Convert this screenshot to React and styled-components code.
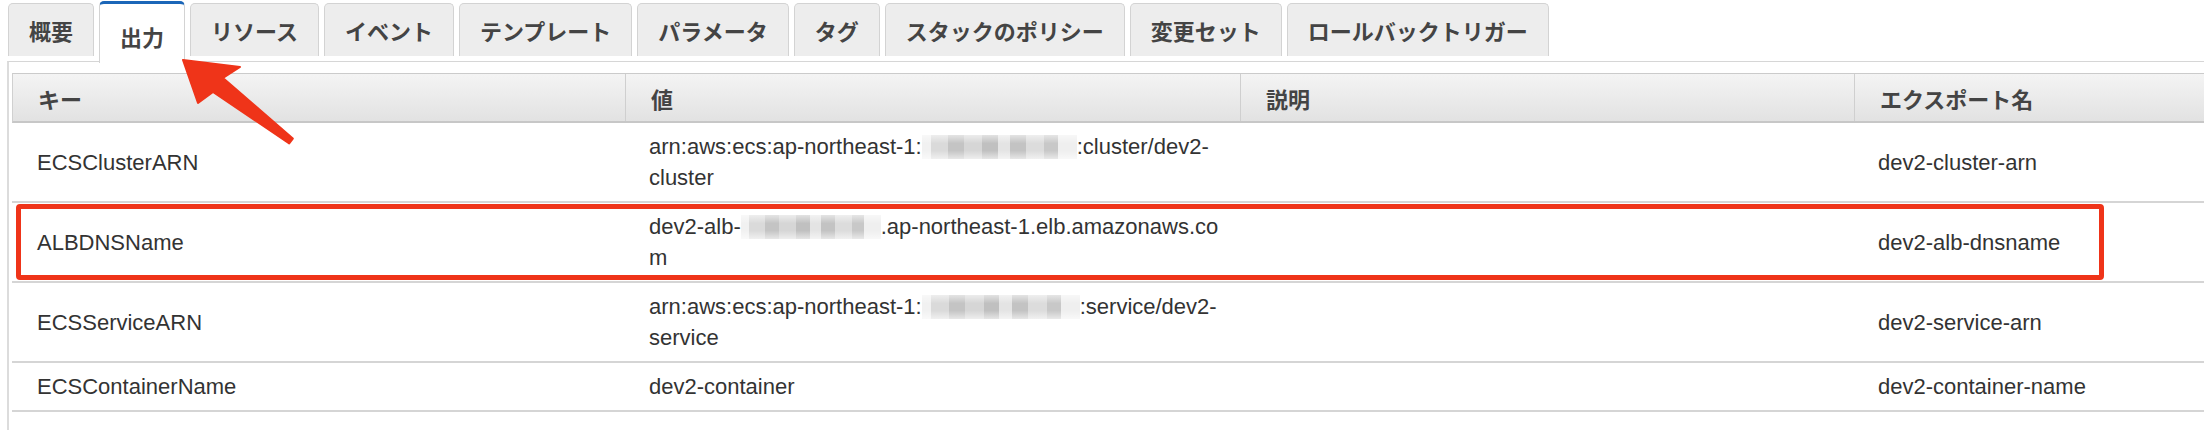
import React from "react"
import styled, { createGlobalStyle, css } from "styled-components"

const GlobalStyle = createGlobalStyle`
  html, body {
    margin: 0;
    padding: 0;
    background: #fff;
    overflow: hidden;
  }
  body {
    font-family: "Liberation Sans", Arial, "Noto Sans CJK JP", sans-serif;
    color: #333;
  }
`

const Page = styled.div`
  position: relative;
  width: 2204px;
  height: 430px;
  overflow: hidden;
`

const TabBar = styled.div`
  display: flex;
  align-items: flex-start;
  gap: 5px;
  height: 61px;
  padding-left: 8px;
`

const Tab = styled.div`
  box-sizing: border-box;
  height: 53px;
  margin-top: 3px;
  padding: 0 20px;
  display: flex;
  align-items: center;
  border: 1px solid #d3d3d3;
  border-bottom: none;
  border-radius: 5px 5px 0 0;
  background: #ededed;
  font-family: "Noto Sans CJK JP", sans-serif;
  font-weight: 700;
  font-size: 22px;
  color: #444;
  white-space: nowrap;

  ${(p) =>
    p.$active &&
    css`
      position: relative;
      z-index: 1;
      height: 62px;
      margin-top: 1px;
      padding-top: 5px;
      background: #fff;
      border-top: 3px solid #1b66b8;
    `}
`

const Panel = styled.div`
  border-top: 1px solid #d6d6d6;
  border-left: 2px solid #dcdcdc;
  margin-left: 7px;
  padding: 11px 0 0 3px;
`

const Table = styled.div`
  width: 2448px;
`

const cols = "612px 615px 614px 1fr"

const HeadRow = styled.div`
  display: grid;
  grid-template-columns: ${cols};
  height: 50px;
  box-sizing: border-box;
  border-top: 1px solid #cbcbcb;
  border-left: 1px solid #d0d0d0;
  border-bottom: 2px solid #c7c7c7;
  background: linear-gradient(#f4f4f4, #e2e2e2);
`

const HeadCell = styled.div`
  display: flex;
  align-items: center;
  padding: 0 25px;
  font-family: "Noto Sans CJK JP", sans-serif;
  font-weight: 700;
  font-size: 22px;
  color: #444;
  & + & {
    border-left: 1px solid #cfcfcf;
  }
`

const Row = styled.div`
  position: relative;
  display: grid;
  grid-template-columns: ${cols};
  border-bottom: 2px solid #d5d5d5;

  ${(p) =>
    p.$highlight &&
    css`
      &::after {
        content: "";
        position: absolute;
        left: 4px;
        width: 2088px;
        top: 1px;
        bottom: 1px;
        box-sizing: border-box;
        border: 5px solid #ef3419;
        border-radius: 4px;
      }
    `}
`

const Cell = styled.div`
  display: flex;
  flex-direction: column;
  justify-content: center;
  padding: 8px 25px;
  min-height: 31px;
  font-size: 22px;
  line-height: 31px;
  color: #333;
`

const Line = styled.div`
  white-space: nowrap;
`

const Mosaic = styled.span`
  display: inline-block;
  width: ${(p) => p.$w}px;
  height: 24px;
  vertical-align: -5px;
  background:
    linear-gradient(180deg, rgba(255, 255, 255, 0.55), rgba(255, 255, 255, 0) 35%, rgba(255, 255, 255, 0) 65%, rgba(255, 255, 255, 0.6)),
    linear-gradient(
      90deg,
      #f1f1f1 0 6%,
      #dadada 6% 17%,
      #c4c4c4 17% 27%,
      #d6d6d6 27% 39%,
      #c0c0c0 39% 49%,
      #e4e4e4 49% 57%,
      #c3c3c3 57% 67%,
      #dcdcdc 67% 79%,
      #c8c8c8 79% 88%,
      #efefef 88%
    );
`

const Arrow = styled.svg`
  position: absolute;
  left: 170px;
  top: 50px;
  width: 140px;
  height: 100px;
  z-index: 2;
  overflow: visible;
`

const tabs = [
  "概要",
  "出力",
  "リソース",
  "イベント",
  "テンプレート",
  "パラメータ",
  "タグ",
  "スタックのポリシー",
  "変更セット",
  "ロールバックトリガー",
]

const rows = [
  {
    key: "ECSClusterARN",
    value: [["arn:aws:ecs:ap-northeast-1:", 155, ":cluster/dev2-"], "cluster"],
    exp: "dev2-cluster-arn",
  },
  {
    key: "ALBDNSName",
    value: [["dev2-alb-", 140, ".ap-northeast-1.elb.amazonaws.co"], "m"],
    exp: "dev2-alb-dnsname",
    highlight: true,
  },
  {
    key: "ECSServiceARN",
    value: [["arn:aws:ecs:ap-northeast-1:", 158, ":service/dev2-"], "service"],
    exp: "dev2-service-arn",
  },
  {
    key: "ECSContainerName",
    value: ["dev2-container"],
    exp: "dev2-container-name",
  },
  { key: "", value: [""], exp: "" },
]

const renderLine = (line, i) => {
  if (typeof line === "string") return <Line key={i}>{line}</Line>
  const [before, w, after] = line
  return (
    <Line key={i}>
      {before}
      <Mosaic $w={w} />
      {after}
    </Line>
  )
}

export default function App() {
  return (
    <Page>
      <GlobalStyle />
      <TabBar>
        {tabs.map((t) => (
          <Tab key={t} $active={t === "出力"}>
            {t}
          </Tab>
        ))}
      </TabBar>

      <Panel>
        <Table>
          <HeadRow>
            <HeadCell>キー</HeadCell>
            <HeadCell>値</HeadCell>
            <HeadCell>説明</HeadCell>
            <HeadCell>エクスポート名</HeadCell>
          </HeadRow>
          {rows.map((r, i) => (
            <Row key={i} $highlight={r.highlight}>
              <Cell>{r.key}</Cell>
              <Cell>{r.value.map(renderLine)}</Cell>
              <Cell />
              <Cell>{r.exp}</Cell>
            </Row>
          ))}
        </Table>
      </Panel>

      {/* annotation arrow pointing at the 出力 tab */}
      <Arrow viewBox="0 0 140 100">
        <polygon
          points="13,10 70,17 53,28 122.8,88.6 119.2,93.4 43,42 28,53"
          fill="#ef3419"
          stroke="#ef3419"
          strokeWidth="2"
          strokeLinejoin="round"
        />
      </Arrow>
    </Page>
  )
}
